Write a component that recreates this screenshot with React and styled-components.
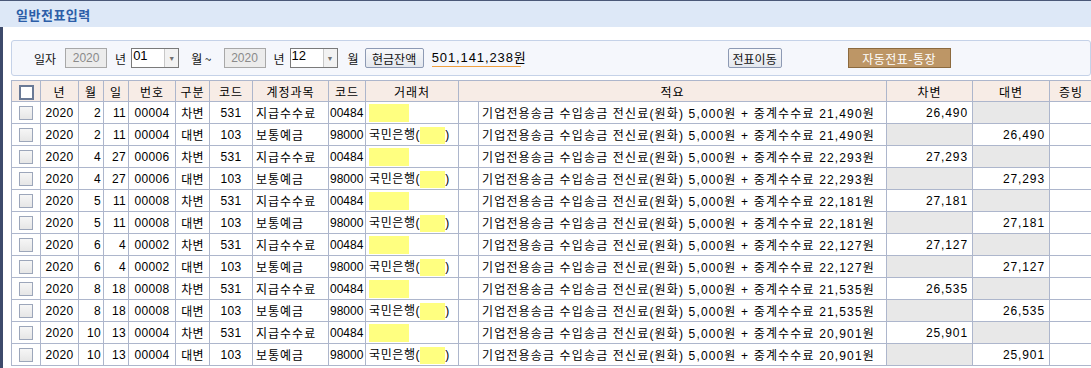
import React from "react";
import styled, { createGlobalStyle } from "styled-components";

const GlobalStyle = createGlobalStyle`
  html, body {
    margin: 0;
    padding: 0;
    background: #fff;
    overflow: hidden;
  }
  body {
    font-family: "Liberation Sans", "Noto Sans CJK KR", sans-serif;
    font-size: 12px;
    color: #000;
  }
`;

const Page = styled.div`
  width: 1091px;
  height: 368px;
  overflow: hidden;
  display: flex;
  flex-direction: column;
`;

const TitleBar = styled.div`
  height: 26px;
  border-top: 1px solid #4a5878;
  background: #dde8f7;
  display: flex;
  align-items: center;
  padding-left: 16px;
`;

const Title = styled.h1`
  margin: 0;
  font-family: "Noto Sans CJK KR", sans-serif;
  font-size: 13px;
  font-weight: 700;
  color: #2c5ea8;
  letter-spacing: 0.5px;
`;

const Body = styled.div`
  flex: 1;
  border-left: 3px solid #3d4a6b;
  padding: 13px 0 0 8px;
  display: flex;
  flex-direction: column;
  gap: 4px;
`;

const Toolbar = styled.div`
  height: 34px;
  border: 1px solid #c5d2e8;
  border-radius: 3px;
  background: #f5f7fc;
  display: flex;
  align-items: center;
  padding-left: 22px;
`;

const Label = styled.span`
  margin-left: ${(p) => p.$ml || 0}px;
  font-family: "Noto Sans CJK KR", sans-serif;
  font-size: 12px;
  color: #111;
  white-space: nowrap;
`;

const YearInput = styled.div`
  margin-left: ${(p) => p.$ml || 0}px;
  width: 40px;
  height: 18px;
  border: 1px solid #a8a8a8;
  background: #ececec;
  color: #8a8a8a;
  font-size: 12px;
  display: flex;
  align-items: center;
  justify-content: center;
`;

const Select = styled.div`
  margin-left: ${(p) => p.$ml || 0}px;
  width: 48px;
  height: 20px;
  box-sizing: border-box;
  border: 1px solid #7a7a7a;
  background: #fff;
  display: flex;
`;

const SelectValue = styled.span`
  flex: 1;
  font-size: 13px;
  line-height: 14px;
  padding-left: 1px;
`;

const SelectArrow = styled.span`
  width: 13px;
  border-left: 1px solid #c8c8c8;
  background: #f2f2f2;
  color: #707070;
  font-size: 7px;
  display: flex;
  align-items: center;
  justify-content: center;
`;

const Button = styled.button`
  margin-left: ${(p) => p.$ml || 0}px;
  width: ${(p) => p.$w}px;
  height: 20px;
  padding: 0;
  border: 1px solid #8d9ab4;
  border-radius: 2px;
  background: linear-gradient(#f8f9fb, #e3e7ee);
  font-family: "Noto Sans CJK KR", sans-serif;
  font-size: 12px;
  color: #111;
  display: flex;
  align-items: center;
  justify-content: center;
`;

const BrownButton = styled(Button)`
  border: 1px solid #8c6a3e;
  border-radius: 0;
  background: #bd9666;
  color: #fff;
  letter-spacing: 0.5px;
`;

const Balance = styled.span`
  margin-left: 8px;
  width: 89px;
  border-bottom: 1px solid #f0a040;
  font-size: 13px;
  line-height: 16px;
  letter-spacing: 0.9px;
  white-space: nowrap;
`;

const Table = styled.table`
  border-collapse: collapse;
  table-layout: fixed;
  width: 1081px;
  border-left: 1px solid #adb6cc;
  border-top: 1px solid #adb6cc;
`;

const Th = styled.th`
  height: 20px;
  padding: 0;
  border: 1px solid #adb6cc;
  background: #f7ece6;
  font-family: "Noto Sans CJK KR", sans-serif;
  font-size: 12px;
  font-weight: 400;
  letter-spacing: 1px;
  text-align: center;
`;

const Tr = styled.tr`
  height: 22px;
`;

const Td = styled.td`
  padding: 0 ${(p) => (p.$align === "right" ? 4 : 0)}px 0
    ${(p) => (p.$align === "left" ? p.$pl ?? 3 : 0)}px;
  border: 1px solid #adb6cc;
  background: ${(p) => (p.$empty ? "#e8e8e8" : "#fff")};
  text-align: ${(p) => p.$align || "center"};
  white-space: nowrap;
  overflow: hidden;
  letter-spacing: ${(p) => p.$ls ?? 0.3}px;
`;

const NumTd = styled(Td)`
  padding-right: ${(p) => p.$pr ?? 4}px;
`;

const HeadBox = styled.span`
  display: inline-block;
  width: 11px;
  height: 11px;
  border: 2px solid #6b7a96;
  background: #fff;
  vertical-align: middle;
`;

const RowBox = styled.span`
  display: inline-block;
  width: 12px;
  height: 12px;
  border: 1px solid #9ca6ba;
  background: linear-gradient(#f6f6f6, #e6e6e6);
  vertical-align: middle;
`;

const Mask = styled.span`
  display: inline-block;
  width: ${(p) => p.$w}px;
  height: ${(p) => p.$h}px;
  background: #ffff80;
  vertical-align: middle;
`;

const cols = [29, 38, 25, 25, 47, 34, 43, 76, 37, 93, 20, 408, 86, 77, 43];

const rows = [
  [2, 11, "00004", 21490, 26490],
  [4, 27, "00006", 22293, 27293],
  [5, 11, "00008", 22181, 27181],
  [6, 4, "00002", 22127, 27127],
  [8, 18, "00008", 21535, 26535],
  [10, 13, "00004", 20901, 25901],
];

const fmt = (n) => n.toLocaleString("en-US");

function Row({ m, d, no, fee, amt, side }) {
  const debit = side === "차변";
  return (
    <Tr>
      <Td>
        <RowBox />
      </Td>
      <Td>2020</Td>
      <NumTd $align="right" $pr={2}>{m}</NumTd>
      <NumTd $align="right" $pr={2}>{d}</NumTd>
      <Td>{no}</Td>
      <Td>{side}</Td>
      <Td>{debit ? "531" : "103"}</Td>
      <Td $align="left" $ls={1}>{debit ? "지급수수료" : "보통예금"}</Td>
      <Td $align="left" $pl={1} $ls={0}>{debit ? "00484" : "98000"}</Td>
      <Td $align="left" $ls={0.6}>
        {debit ? (
          <Mask $w={40} $h={18} />
        ) : (
          <>
            국민은행(
            <Mask $w={25} $h={17} />)
          </>
        )}
      </Td>
      <Td />
      <Td $align="left" $ls={1.15}>
        기업전용송금 수입송금 전신료(원화) 5,000원 + 중계수수료 {fmt(fee)}원
      </Td>
      <NumTd $align="right" $empty={!debit} $ls={0.9}>{debit ? fmt(amt) : ""}</NumTd>
      <NumTd $align="right" $empty={debit} $ls={0.9}>{debit ? "" : fmt(amt)}</NumTd>
      <Td />
    </Tr>
  );
}

export default function App() {
  return (
    <Page>
      <GlobalStyle />
      <TitleBar>
        <Title>일반전표입력</Title>
      </TitleBar>
      <Body>
        <Toolbar>
          <Label>일자</Label>
          <YearInput $ml={9}>2020</YearInput>
          <Label $ml={8}>년</Label>
          <Select $ml={5}>
            <SelectValue>01</SelectValue>
            <SelectArrow>▼</SelectArrow>
          </Select>
          <Label $ml={12}>월 ~</Label>
          <YearInput $ml={12}>2020</YearInput>
          <Label $ml={8}>년</Label>
          <Select $ml={5}>
            <SelectValue>12</SelectValue>
            <SelectArrow>▼</SelectArrow>
          </Select>
          <Label $ml={10}>월</Label>
          <Button $ml={6} $w={59}>현금잔액</Button>
          <Balance>501,141,238원</Balance>
          <Button $ml={207} $w={54}>전표이동</Button>
          <BrownButton $ml={66} $w={103}>자동전표-통장</BrownButton>
        </Toolbar>
        <Table>
          <colgroup>
            {cols.map((w, i) => (
              <col key={i} style={{ width: w }} />
            ))}
          </colgroup>
          <thead>
            <tr>
              <Th>
                <HeadBox />
              </Th>
              <Th>년</Th>
              <Th>월</Th>
              <Th>일</Th>
              <Th>번호</Th>
              <Th>구분</Th>
              <Th>코드</Th>
              <Th>계정과목</Th>
              <Th>코드</Th>
              <Th>거래처</Th>
              <Th colSpan={2}>적요</Th>
              <Th>차변</Th>
              <Th>대변</Th>
              <Th>증빙</Th>
            </tr>
          </thead>
          <tbody>
            {rows.flatMap(([m, d, no, fee, amt]) => [
              <Row key={no + m + "c"} m={m} d={d} no={no} fee={fee} amt={amt} side="차변" />,
              <Row key={no + m + "d"} m={m} d={d} no={no} fee={fee} amt={amt} side="대변" />,
            ])}
          </tbody>
        </Table>
      </Body>
    </Page>
  );
}
